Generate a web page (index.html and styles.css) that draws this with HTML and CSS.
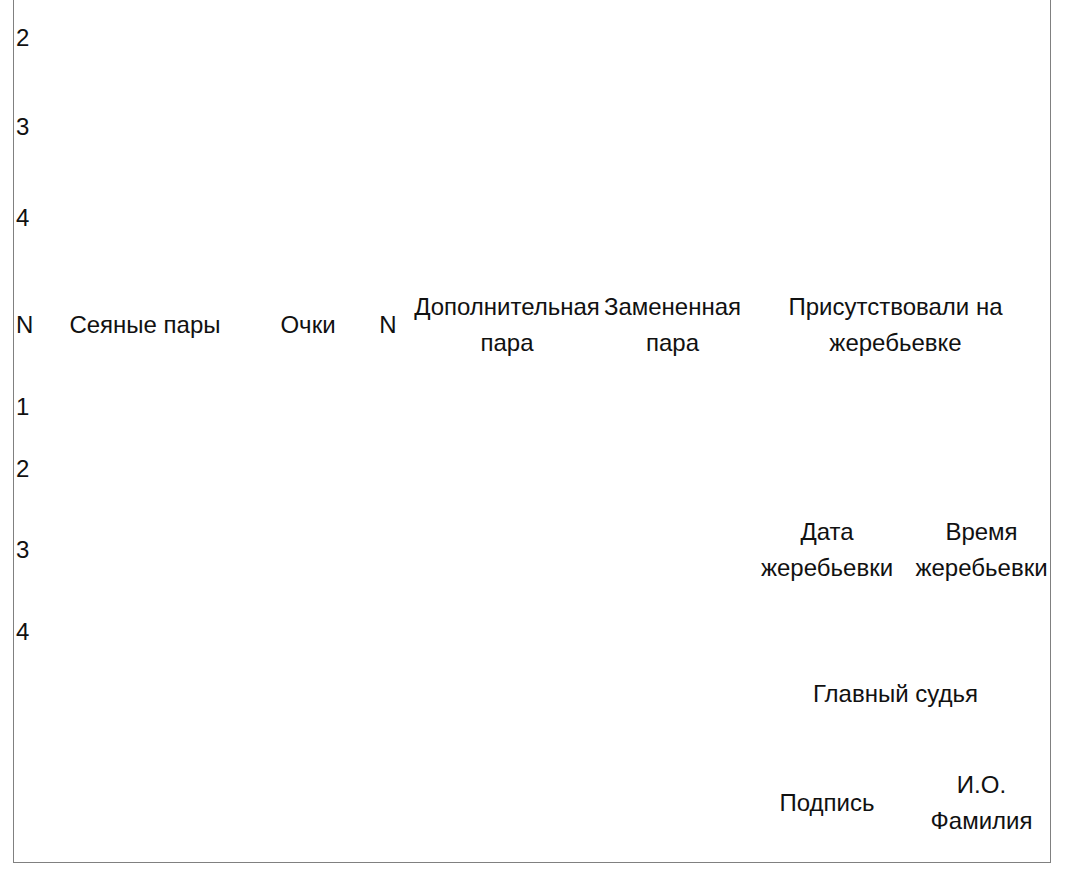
FILE: index.html
```html
<!DOCTYPE html>
<html lang="ru">
<head>
<meta charset="utf-8">
<title>Жеребьевка</title>
<link rel="stylesheet" href="styles.css">
</head>
<body>
<div class="sheet">
  <div class="cell num r1">2</div>
  <div class="cell num r2">3</div>
  <div class="cell num r3">4</div>

  <div class="cell num hdr">N</div>
  <div class="cell c2 hdr">Сеяные пары</div>
  <div class="cell c3 hdr">Очки</div>
  <div class="cell c4 hdr">N</div>
  <div class="cell c5 hdr">Дополнительная пара</div>
  <div class="cell c6 hdr">Замененная пара</div>
  <div class="cell right hdr">Присутствовали на жеребьевке</div>

  <div class="cell num b1">1</div>
  <div class="cell num b2">2</div>
  <div class="cell num b3">3</div>
  <div class="cell num b4">4</div>

  <div class="cell c7 b3">Дата жеребьевки</div>
  <div class="cell c8 b3">Время жеребьевки</div>
  <div class="cell right b5">Главный судья</div>
  <div class="cell c7 b6 sign">Подпись</div>
  <div class="cell c8 b6 sign">И.О. Фамилия</div>
</div>
</body>
</html>
```

FILE: styles.css
```css
html, body {
  margin: 0;
  padding: 0;
  background: #ffffff;
}

body {
  font-family: "Liberation Sans", Arial, sans-serif;
  font-size: 24px;
  line-height: 36px;
  color: #111111;
}

.sheet {
  margin: -17px 0 0 13px;
  width: 1036px;
  border: 1px solid #808080;
  display: grid;
  grid-template-columns: 26px 210px 116px 44px 194px 137px 172px 137px;
  grid-template-rows: 108px 70px 112px 102px 62px 62px 100px 64px 60px 138px;
}

.cell {
  display: flex;
  align-items: center;
  justify-content: center;
  text-align: center;
}

.num {
  grid-column: 1;
  justify-content: flex-start;
  padding-left: 2px;
}

.c2 { grid-column: 2; }
.c3 { grid-column: 3; }
.c4 { grid-column: 4; }
.c5 { grid-column: 5; }
.c6 { grid-column: 6; }
.c7 { grid-column: 7; }
.c8 { grid-column: 8; }
.right { grid-column: 7 / span 2; }

.r1 { grid-row: 1; }
.r2 { grid-row: 2; }
.r3 { grid-row: 3; }
.hdr { grid-row: 4; }
.b1 { grid-row: 5; }
.b2 { grid-row: 6; }
.b3 { grid-row: 7; }
.b4 { grid-row: 8; }
.b5 { grid-row: 9; }
.b6 { grid-row: 10; }

.sign {
  padding-top: 20px;
}
```
